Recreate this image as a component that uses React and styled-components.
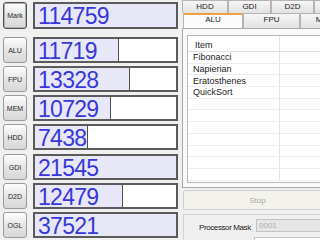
import React from 'react';
import styled, { createGlobalStyle } from 'styled-components';

const GlobalStyle = createGlobalStyle`
  html, body {
    margin: 0;
    padding: 0;
    background: #f0f0f0;
    overflow: hidden;
  }
  body {
    font-family: "Liberation Sans", Arial, sans-serif;
  }
`;

const Window = styled.div`
  display: flex;
  width: 320px;
  height: 240px;
  overflow: hidden;
  background: #f0f0f0;
`;

const ScoreColumn = styled.div`
  display: flex;
  flex-direction: column;
  width: 177px;
  padding: 2px 0 0 3px;
  flex-shrink: 0;
`;

const Group = styled.div`
  display: flex;
  flex-direction: column;
  gap: 3px;
  margin-top: ${(p) => p.$space}px;
`;

const ScoreRow = styled.div`
  display: flex;
  align-items: stretch;
  gap: 6px;
  height: ${(p) => (p.$tall ? 27 : 26)}px;
`;

const SideButton = styled.div`
  width: 24px;
  box-sizing: border-box;
  display: flex;
  align-items: center;
  justify-content: center;
  border: 1px solid ${(p) => (p.$default ? '#505050' : '#9a9a9a')};
  border-radius: 3px;
  background: linear-gradient(#fdfdfd, #e4e4e4 55%, #d8d8d8);
  box-shadow: ${(p) => (p.$default ? 'inset 0 0 0 1px #a8b0b8' : 'none')};
  font-size: 7px;
  color: #2a2a2a;
`;

const ScoreBox = styled.div`
  width: 145px;
  box-sizing: border-box;
  border: 2px solid #5a5a5a;
  background: #ffffff;
  position: relative;
  display: flex;
  align-items: center;
  overflow: hidden;
`;

const ScoreFill = styled.div`
  position: absolute;
  left: 0;
  top: 0;
  bottom: 0;
  background: #e7e7f7;
  border-right: ${(p) => (p.$full ? 'none' : '1px solid #505050')};
`;

const ScoreValue = styled.span`
  position: relative;
  padding: 2px 0 0 3px;
  font-size: 23px;
  letter-spacing: -0.7px;
  color: #3838d8;
  line-height: 1;
`;

const TestColumn = styled.div`
  display: flex;
  flex-direction: column;
  width: 150px;
  margin-left: 2px;
  flex-shrink: 0;
`;

const TabRow = styled.div`
  display: flex;
  flex-shrink: 0;
  height: ${(p) => p.$h}px;
  padding-left: ${(p) => p.$indent}px;
`;

const Tab = styled.div`
  width: ${(p) => p.$w}px;
  flex-shrink: 0;
  box-sizing: border-box;
  border: 1px solid #b4b4b4;
  border-bottom: none;
  border-top: ${(p) => (p.$active ? '2px solid #eaa33c' : '1px solid #b4b4b4')};
  background: ${(p) => (p.$active ? '#fbfbfb' : 'linear-gradient(#f6f6f6, #e2e2e2)')};
  font-size: 8px;
  color: #222;
  text-align: center;
  line-height: ${(p) => (p.$active ? 10 : 11)}px;
  overflow: hidden;
`;

const TabPanel = styled.div`
  flex-shrink: 0;
  height: 160px;
  box-sizing: border-box;
  border: 1px solid #a8a8a8;
  border-right: none;
  background: #f9f9f9;
  padding: 6px 0 4px 4px;
  display: flex;
`;

const ListView = styled.div`
  flex: 1;
  border: 1px solid #b8b8b8;
  border-right: none;
  background: #ffffff;
  display: flex;
  flex-direction: column;
  overflow: hidden;
`;

const ListRow = styled.div`
  display: grid;
  flex-shrink: 0;
  grid-template-columns: 92px 1fr;
  height: ${(p) => (p.$header ? 16 : 11.7)}px;
  box-sizing: border-box;
  border-bottom: 1px solid ${(p) => (p.$header ? '#e0e0e0' : '#ededed')};
  font-size: 9px;
  color: #1a1a1a;
`;

const ListCell = styled.div`
  display: flex;
  align-items: center;
  padding-left: ${(p) => (p.$header ? 7 : 5)}px;
  padding-top: ${(p) => (p.$header ? 2 : 0)}px;
  border-right: 1px solid #e2e2e2;
  white-space: nowrap;
`;

const StopButton = styled.div`
  flex-shrink: 0;
  margin: 2px 0 0 1px;
  height: 20px;
  box-sizing: border-box;
  border: 1px solid #cfcfcf;
  border-radius: 2px;
  background: #f3f3ec;
  display: flex;
  align-items: center;
  justify-content: center;
  font-size: 8px;
  color: #a8a8a8;
`;

const OptionGroup = styled.div`
  margin: 4px 0 0 1px;
  flex: 1;
  min-height: 0;
  border: 1px solid #d2d2d2;
  border-right: none;
  border-bottom: none;
  background: #efefef;
  padding: 4px 0 0 15px;
  display: flex;
  flex-direction: column;
  gap: 5px;
  overflow: hidden;
`;

const FieldRow = styled.div`
  display: flex;
  flex-shrink: 0;
  align-items: center;
  gap: 6px;
`;

const FieldLabel = styled.span`
  width: 51px;
  font-size: 8px;
  letter-spacing: -0.4px;
  color: #1a1a1a;
  white-space: nowrap;
  padding-top: 3px;
`;

const TextBox = styled.div`
  width: 80px;
  height: 13px;
  box-sizing: border-box;
  border: 1px solid #c4c4c4;
  background: ${(p) => (p.$disabled ? '#e6e6e6' : '#ffffff')};
  font-size: 8px;
  color: #b0b0b0;
  padding-left: 2px;
  line-height: 11px;
`;

const groups = [
  { space: 0, tests: [{ name: 'Mark', score: 114759, pct: 100, isDefault: true }] },
  {
    space: 8,
    tests: [
      { name: 'ALU', score: 11719, pct: 59 },
      { name: 'FPU', score: 13328, pct: 66.7 },
      { name: 'MEM', score: 10729, pct: 53 },
      { name: 'HDD', score: 7438, pct: 37 },
    ],
  },
  {
    space: 4,
    tests: [
      { name: 'GDI', score: 21545, pct: 100 },
      { name: 'D2D', score: 12479, pct: 62 },
      { name: 'OGL', score: 37521, pct: 100 },
    ],
  },
];

const items = ['Fibonacci', 'Napierian', 'Eratosthenes', 'QuickSort', '', '', '', '', '', '', ''];

export default function App() {
  return (
    <Window>
      <GlobalStyle />
      <ScoreColumn>
        {groups.map((group, gi) => (
          <Group key={gi} $space={group.space}>
            {group.tests.map((t) => (
              <ScoreRow key={t.name} $tall={t.isDefault}>
                <SideButton $default={t.isDefault}>{t.name}</SideButton>
                <ScoreBox>
                  <ScoreFill $full={t.pct >= 100} style={{ width: `${t.pct}%` }} />
                  <ScoreValue>{t.score}</ScoreValue>
                </ScoreBox>
              </ScoreRow>
            ))}
          </Group>
        ))}
      </ScoreColumn>
      <TestColumn>
        <TabRow $h={13} $indent={0}>
          <Tab $w={46}>HDD</Tab>
          <Tab $w={43}>GDI</Tab>
          <Tab $w={43}>D2D</Tab>
          <Tab $w={40} />
        </TabRow>
        <TabRow $h={15} $indent={1}>
          <Tab $w={60} $active>ALU</Tab>
          <Tab $w={57}>FPU</Tab>
          <Tab $w={50}>MEM</Tab>
        </TabRow>
        <TabPanel>
          <ListView>
            <ListRow $header>
              <ListCell $header>Item</ListCell>
              <ListCell />
            </ListRow>
            {items.map((it, i) => (
              <ListRow key={i}>
                <ListCell>{it}</ListCell>
                <ListCell />
              </ListRow>
            ))}
          </ListView>
        </TabPanel>
        <StopButton>Stop</StopButton>
        <OptionGroup>
          <FieldRow>
            <FieldLabel>Processor Mask</FieldLabel>
            <TextBox $disabled>0001</TextBox>
          </FieldRow>
          <FieldRow>
            <FieldLabel />
            <TextBox />
          </FieldRow>
        </OptionGroup>
      </TestColumn>
    </Window>
  );
}
